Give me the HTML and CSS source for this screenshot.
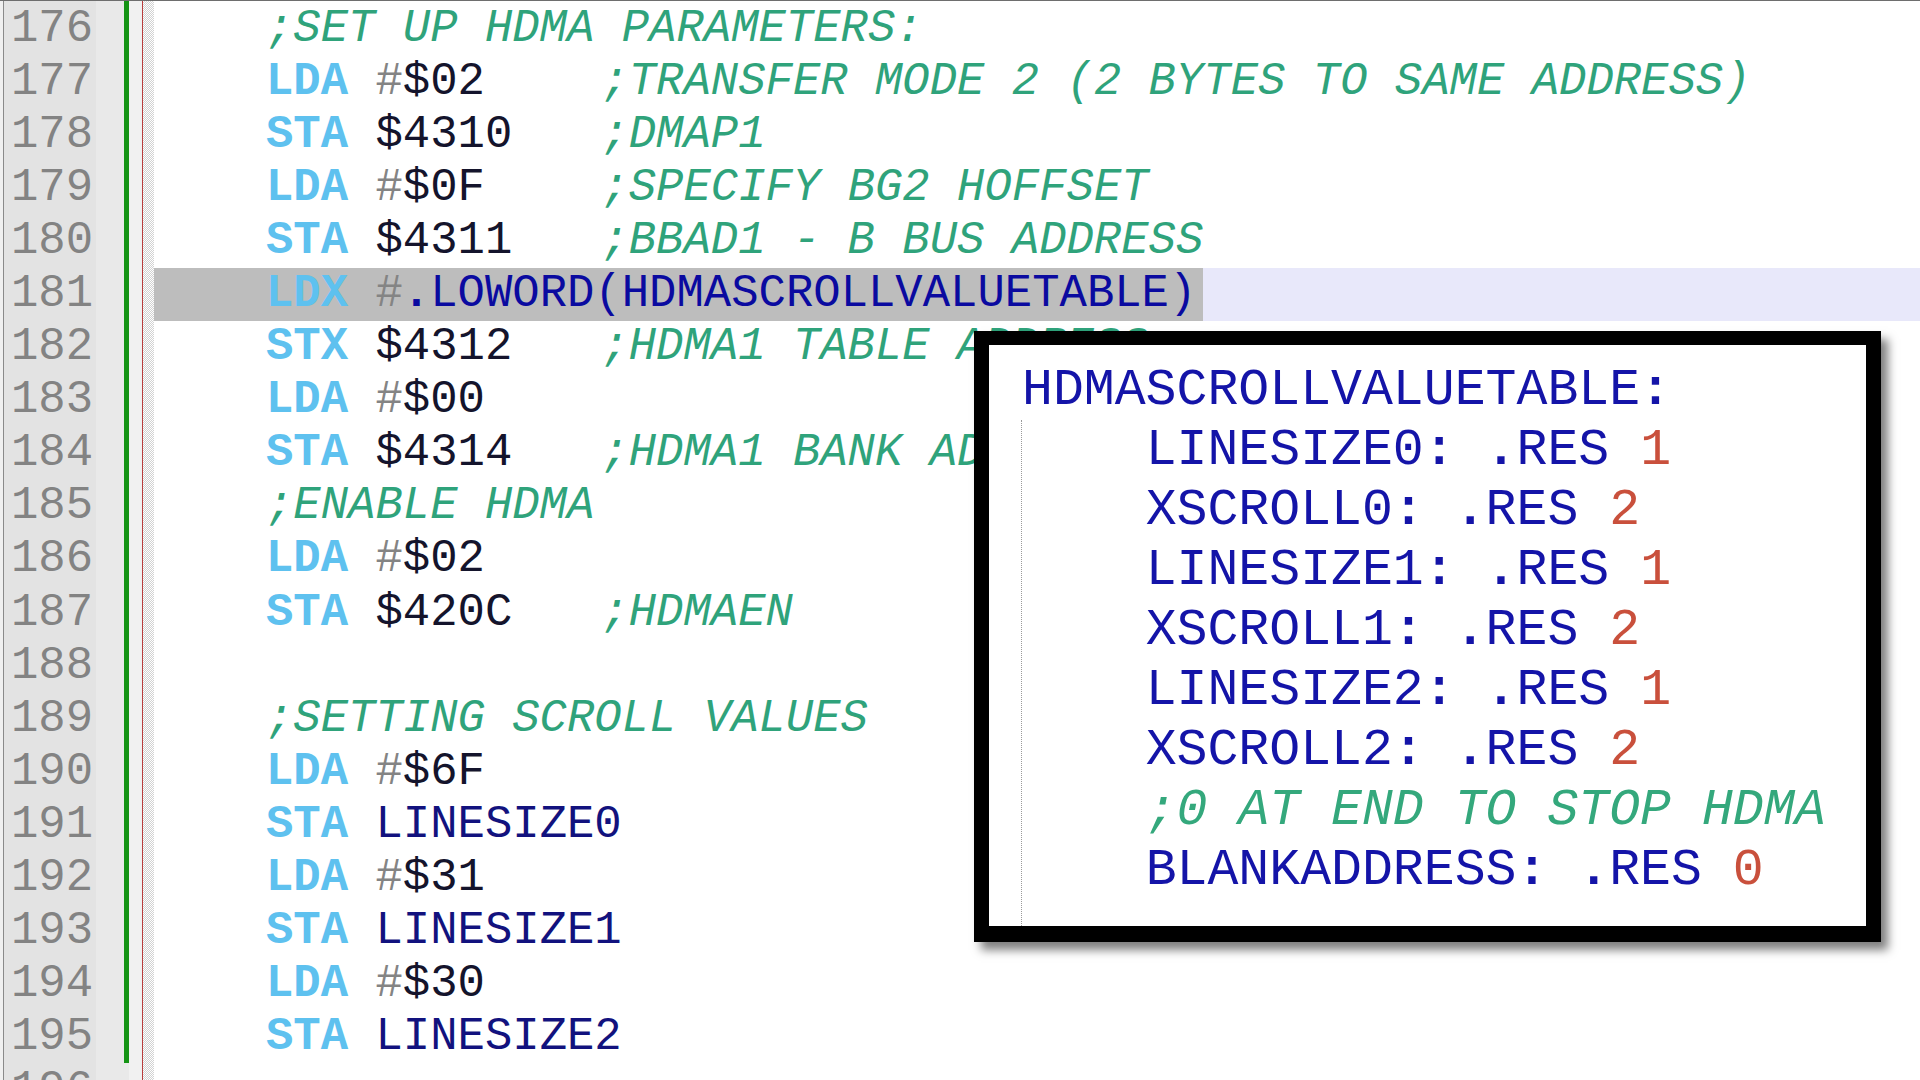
FILE: index.html
```html
<!DOCTYPE html>
<html>
<head>
<meta charset="utf-8">
<link rel="stylesheet" href="styles.css">
</head>
<body>
<div class="editor">
  <div class="linenos">
    <div>176</div><div>177</div><div>178</div><div>179</div><div>180</div>
    <div>181</div><div>182</div><div>183</div><div>184</div><div>185</div>
    <div>186</div><div>187</div><div>188</div><div>189</div><div>190</div>
    <div>191</div><div>192</div><div>193</div><div>194</div><div>195</div>
    <div>196</div>
  </div>
  <div class="bookmarks"></div>
  <div class="changes"><div class="changed"></div></div>
  <div class="gap"></div>
  <div class="fold"></div>
  <div class="code">
    <div class="line"><span class="c">;SET UP HDMA PARAMETERS:</span></div>
    <div class="line"><span class="k">LDA</span> <span class="h">#</span><span class="n">$02</span>    <span class="c t">;TRANSFER MODE 2 (2 BYTES TO SAME ADDRESS)</span></div>
    <div class="line"><span class="k">STA</span> <span class="n">$4310</span>   <span class="c t">;DMAP1</span></div>
    <div class="line"><span class="k">LDA</span> <span class="h">#</span><span class="n">$0F</span>    <span class="c t">;SPECIFY BG2 HOFFSET</span></div>
    <div class="line"><span class="k">STA</span> <span class="n">$4311</span>   <span class="c t">;BBAD1 - B BUS ADDRESS</span></div>
    <div class="line current"><span class="sel"><span class="k">LDX</span> <span class="h">#</span><span class="o">.</span><span class="i">LOWORD(HDMASCROLLVALUETABLE)</span></span></div>
    <div class="line"><span class="k">STX</span> <span class="n">$4312</span>   <span class="c t">;HDMA1 TABLE ADDRESS</span></div>
    <div class="line"><span class="k">LDA</span> <span class="h">#</span><span class="n">$00</span></div>
    <div class="line"><span class="k">STA</span> <span class="n">$4314</span>   <span class="c t">;HDMA1 BANK ADDRESS</span></div>
    <div class="line"><span class="c">;ENABLE HDMA</span></div>
    <div class="line"><span class="k">LDA</span> <span class="h">#</span><span class="n">$02</span></div>
    <div class="line"><span class="k">STA</span> <span class="n">$420C</span>   <span class="c t">;HDMAEN</span></div>
    <div class="line"> </div>
    <div class="line"><span class="c">;SETTING SCROLL VALUES</span></div>
    <div class="line"><span class="k">LDA</span> <span class="h">#</span><span class="n">$6F</span></div>
    <div class="line"><span class="k">STA</span> <span class="i">LINESIZE0</span></div>
    <div class="line"><span class="k">LDA</span> <span class="h">#</span><span class="n">$31</span></div>
    <div class="line"><span class="k">STA</span> <span class="i">LINESIZE1</span></div>
    <div class="line"><span class="k">LDA</span> <span class="h">#</span><span class="n">$30</span></div>
    <div class="line"><span class="k">STA</span> <span class="i">LINESIZE2</span></div>
    <div class="line"> </div>
  </div>
</div>

<div class="popup">
  <div class="pline"><span class="pi">HDMASCROLLVALUETABLE</span><span class="po">:</span></div>
  <div class="pblock">
    <div class="pline">    <span class="pi">LINESIZE0</span><span class="po">:</span> <span class="po">.</span><span class="pi">RES</span> <span class="pn">1</span></div>
    <div class="pline">    <span class="pi">XSCROLL0</span><span class="po">:</span> <span class="po">.</span><span class="pi">RES</span> <span class="pn">2</span></div>
    <div class="pline">    <span class="pi">LINESIZE1</span><span class="po">:</span> <span class="po">.</span><span class="pi">RES</span> <span class="pn">1</span></div>
    <div class="pline">    <span class="pi">XSCROLL1</span><span class="po">:</span> <span class="po">.</span><span class="pi">RES</span> <span class="pn">2</span></div>
    <div class="pline">    <span class="pi">LINESIZE2</span><span class="po">:</span> <span class="po">.</span><span class="pi">RES</span> <span class="pn">1</span></div>
    <div class="pline">    <span class="pi">XSCROLL2</span><span class="po">:</span> <span class="po">.</span><span class="pi">RES</span> <span class="pn">2</span></div>
    <div class="pline">    <span class="pc">;0 AT END TO STOP HDMA</span></div>
    <div class="pline">    <span class="pi">BLANKADDRESS</span><span class="po">:</span> <span class="po">.</span><span class="pi">RES</span> <span class="pn">0</span></div>
  </div>
</div>
</body>
</html>
```
FILE: styles.css
```css
html, body {
  margin: 0;
  padding: 0;
  width: 1920px;
  height: 1080px;
  overflow: hidden;
  background: #ffffff;
}

.editor {
  display: flex;
  height: 1080px;
  box-sizing: border-box;
  border-top: 1px solid #6e6e6e;
  padding-left: 3px;
  background: #f0f0f0;
  font-family: "Liberation Mono", "Courier New", monospace;
  font-size: 45.6px;
  line-height: 53.05px;
}

.linenos {
  width: 93px;
  flex: none;
  border-left: 1px solid #8a8a8a;
  background: #e3e3e3;
  color: #838383;
  padding-top: 2px;
  padding-left: 7px;
  box-sizing: border-box;
}

.linenos div {
  height: 53.05px;
}

.bookmarks {
  width: 28px;
  flex: none;
  background: #e9e9e9;
}

.changes {
  width: 5px;
  flex: none;
  background: #e9e9e9;
}

.changed {
  height: 1062px;
  background: #149414;
}

.gap {
  width: 13px;
  flex: none;
  background: #f1f1f1;
}

.fold {
  width: 12px;
  flex: none;
  box-sizing: border-box;
  border-left: 1px solid #b83c3c;
  background-color: #ffffff;
  background-image:
    linear-gradient(45deg, #d2d2d2 25%, transparent 25%, transparent 75%, #d2d2d2 75%),
    linear-gradient(45deg, #d2d2d2 25%, transparent 25%, transparent 75%, #d2d2d2 75%);
  background-size: 2px 2px;
  background-position: 0 0, 1px 1px;
}

.code {
  flex: 1;
  background: #ffffff;
  padding-top: 2px;
  color: #101030;
}

.line {
  height: 53.05px;
  padding-left: 112px;
  white-space: pre;
}

.line.current {
  padding-left: 0;
  background: #e8e8fa;
}

.sel {
  display: inline-block;
  background: #bdbdbd;
  padding-left: 112px;
  padding-right: 7px;
}

.k {
  color: #5ec1ef;
  font-weight: bold;
}

.h {
  color: #848484;
}

.n {
  color: #14142c;
}

.i {
  color: #12127e;
}

.current .i {
  color: #0a0aa0;
}

.o {
  color: #0a0aa0;
  font-weight: bold;
}

.c {
  color: #2fa37b;
  font-style: italic;
}

.t {
  margin-left: 7px;
}

.popup {
  position: absolute;
  left: 974px;
  top: 331px;
  width: 907px;
  height: 611px;
  box-sizing: border-box;
  border-style: solid;
  border-color: #000000;
  border-width: 14px 15px 16px 15px;
  background: #ffffff;
  box-shadow: 7px 8px 9px rgba(0, 0, 0, 0.5);
  padding: 15px 0 0 33px;
  display: flex;
  flex-direction: column;
  font-family: "Liberation Mono", "Courier New", monospace;
  font-size: 51.5px;
  line-height: 60px;
}

.pblock {
  flex: 1;
  border-left: 1px dotted #9a9a9a;
  margin-left: -1px;
}

.pline {
  height: 60px;
  white-space: pre;
}

.pi {
  color: #1414a8;
}

.po {
  color: #1414a8;
  font-weight: bold;
}

.pn {
  color: #c9503c;
}

.pc {
  color: #34a87c;
  font-style: italic;
}
```
